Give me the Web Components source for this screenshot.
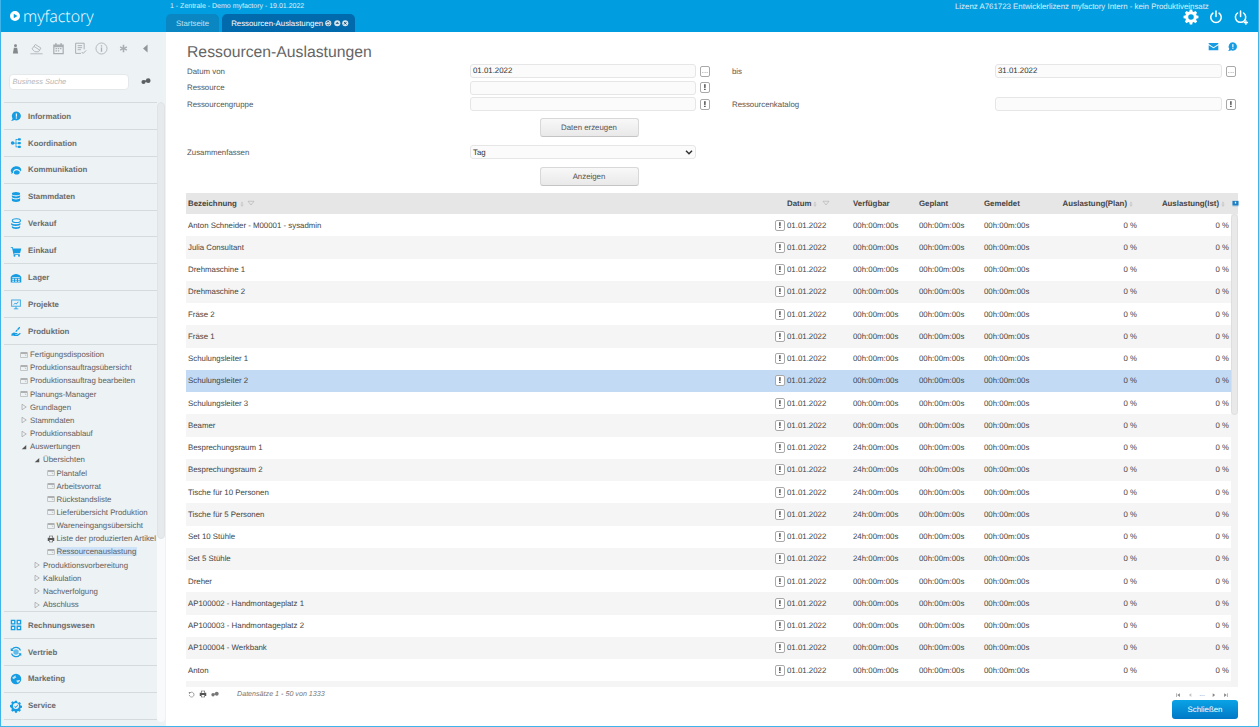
<!DOCTYPE html>
<html lang="de">
<head>
<meta charset="utf-8">
<title>myfactory</title>
<style>
  html, body { margin: 0; height: 100%; overflow: hidden; background: #fff; }
  body { font: 7.85px "Liberation Sans", Arial, sans-serif; color: #555; text-rendering: geometricPrecision; }
</style>
</head>
<body>
<mf-app></mf-app>
<script>
const ICONS = {
  info: '<path d="M8.500 2a6 6 0 1 1-2.600 11.400c-1.200.8-2.500 1.200-4.400 1.100 1.100-.9 1.700-2 1.800-3.300A6 6 0 0 1 8.500 2z"/><rect x="7.700" y="4.600" width="1.700" height="4.400" fill="#edf2f5"/><rect x="7.700" y="9.800" width="1.700" height="1.700" fill="#edf2f5"/>',
  nodes: '<circle cx="3.500" cy="8" r="2.400"/><rect x="10.500" y="1.500" width="4" height="3" rx="1"/><rect x="10.500" y="6.500" width="4" height="3" rx="1"/><rect x="10.500" y="11.500" width="4" height="3" rx="1"/><path d="M5 7.500h2.500V2.500h3v1H8.500v4h2v1h-2v4h2v1h-3V8.500H5z"/>',
  talk: '<path d="M1 9.500C1 6 4.500 3 8.500 3c3.600 0 6.500 2 6.500 5 0 .8-.2 1.400-.6 2-1-2.200-3.600-3.400-6-3.200C5.600 7 3.800 9 4 12l-2.600 1 .8-2.200A4 4 0 0 1 1 9.500z"/><path d="M5 11.500c0-2 1.800-3.200 3.800-3.200 2.500 0 4.200 1.300 4.200 3 0 1.600-1.700 2.700-4 2.700-2.400 0-4-1-4-2.500z"/>',
  db: '<ellipse cx="8" cy="3.500" rx="5.500" ry="2.300"/><path d="M2.500 5.300c1 1.400 2.900 1.900 5.500 1.900s4.500-.5 5.500-1.900v2.400c0 1.200-2.500 2.100-5.500 2.100s-5.500-.9-5.500-2.100z"/><path d="M2.500 9.300c1 1.400 2.900 1.900 5.500 1.900s4.500-.5 5.500-1.900v3c0 1.300-2.500 2.200-5.500 2.200s-5.500-.9-5.500-2.200z"/>',
  coins: '<ellipse cx="8.500" cy="3.500" rx="5.500" ry="2.600" fill="none" stroke="currentColor" stroke-width="1.400"/><path d="M1.500 6.500c1 1.200 3.500 1.700 6 1.700s5-.5 6.500-1.700v1.800c0 1.200-3 2.200-6.500 2.200s-6-1-6-2.200z"/><path d="M2.500 10.500c1 1.200 3 1.700 5.500 1.700s4.500-.5 5.500-1.700v1.800c0 1.200-2.500 2.200-5.500 2.200s-5.500-1-5.500-2.200z"/>',
  cart: '<path d="M1 2.500h2.600l.5 2H15l-1.500 6H5.600l.3 1.300H13v1.300H4.800L2.700 3.800H1z"/><circle cx="6" cy="14.200" r="1.300"/><circle cx="12" cy="14.200" r="1.300"/>',
  store: '<path d="M1 6.500C3 3.500 5.500 2.500 8 2.500s5 1 7 4V14H1z"/><g fill="#edf2f5"><rect x="3" y="7" width="10" height="1.100"/><rect x="3" y="9" width="2.400" height="1.500"/><rect x="6.800" y="9" width="2.400" height="1.500"/><rect x="10.600" y="9" width="2.400" height="1.500"/><rect x="3" y="11.500" width="2.400" height="1.500"/><rect x="6.800" y="11.500" width="2.400" height="1.500"/><rect x="10.600" y="11.500" width="2.400" height="1.500"/></g>',
  board: '<path fill-rule="evenodd" d="M1.500 2h13v9.500h-13zM2.800 3.300v6.900h10.400V3.300z" opacity=".8"/><path d="M4.500 8.500l2.300-2.300 1.500 1.200 2.600-2.700.6.600-3.100 3.300-1.600-1.200-1.700 1.700zM7.400 11.500h1.200V14H11v1H5v-1h2.400z"/>',
  plant: '<path d="M2 11.500l2.500-1.300c1.300-.5 2.300 0 3 .4h1.800c1 0 1 1.400 0 1.400H7v.5h3l3-1.800c1-.4 1.500.7.800 1.300L10.500 14.800H5.500l-1.300-.7L2 14.800z"/><path d="M7.500 9.300c-.2-2 .8-3.200 2.700-3.200-.1 1.800-1.100 3-2.700 3.200zM9.800 6.500c0-2.200 1.200-3.700 3.700-4.300-.1 2.600-1.400 4-3.700 4.300z"/>',
  tiles: '<path fill-rule="evenodd" d="M1 1h6.300v6.300H1zm1.800 1.800v2.700h2.700V2.800zM8.700 1H15v6.300H8.700zm1.800 1.800v2.700h2.700V2.800zM1 8.700h6.300V15H1zm1.800 1.800v2.700h2.700v-2.700zM8.700 8.700H15V15H8.700zm1.800 1.800v2.700h2.700v-2.700z"/>',
  sync: '<path fill-rule="evenodd" d="M8 1a7 7 0 0 1 6.700 5h-1.600A5.500 5.500 0 0 0 3.400 5L5 6.500H1V2.500l1.300 1.300A7 7 0 0 1 8 1zM1.300 10h1.600a5.500 5.500 0 0 0 9.700 1L11 9.500h4v4l-1.300-1.300A7 7 0 0 1 1.300 10z"/><circle cx="8" cy="8" r="3.600" opacity=".65"/>',
  globe: '<circle cx="8" cy="8" r="7"/><path fill="#edf2f5" d="M3 6c1.500-.5 3-2 4.500-3-.5 1.500 0 2 1 2.500-1 1-2.500 1-3 2.500C4.500 8 3.500 7.500 3 6zm5.500 4c1.500-.5 3.500-1 5-.5-.5 1.500-2 3-3.500 3.500-.5-1-1.500-2-1.500-3z" opacity=".8"/>',
  service: '<path fill-rule="evenodd" d="M6.700 1h2.600l.4 1.900 1.300.6 1.700-1 1.800 1.800-1 1.700.6 1.300 1.900.4v2.600l-1.900.4-.6 1.300 1 1.700-1.800 1.800-1.700-1-1.300.6-.4 1.900H6.700l-.4-1.900-1.300-.6-1.700 1-1.800-1.800 1-1.700-.6-1.300L0 9.300V6.700l1.900-.4.600-1.300-1-1.700 1.800-1.800 1.700 1 1.300-.6zM8 4a4 4 0 1 0 0 8 4 4 0 0 0 0-8z"/><path d="M6 7.500l1.500 1.500L10.500 6v1.800L7.500 10.800 6 9.300z"/>',
  person: '<g fill="#84898c"><circle cx="8" cy="4.500" r="1.800"/><path d="M6 7h4l1.200 7H4.800z"/></g>',
  eraser: '<path fill="none" stroke="currentColor" stroke-width="1" d="M2.500 8.500L6.500 3l7 4.500-3 4.500H6zM.5 14.500h15M5 5.500l7 4.500"/>',
  calendar: '<path fill-rule="evenodd" d="M1.500 3h2.300V1.500h2V3h4.400V1.500h2V3h2.300v12h-13zM3 6.500V13.500h10V6.500z"/><path d="M4.300 7.500h1.800v1.500H4.300zm2.800 0h1.800v1.500H7.100zm2.800 0h1.800v1.500H9.900zM4.300 10.300h1.800v1.500H4.300zm2.800 0h1.800v1.500H7.100z"/>',
  note: '<path fill="none" stroke="currentColor" stroke-width="1.200" d="M12.500 9V1.500H2v12.500h6.500M4.500 4.500h5.500M4.500 7h5.500M4.500 9.500h4M9.500 12.300l1.700 1.800L15 10.300"/>',
  circleinfo: '<circle cx="8" cy="8" r="6.800" fill="none" stroke="currentColor" stroke-width="1"/><rect x="7.200" y="4" width="1.600" height="1.600"/><rect x="7.200" y="6.700" width="1.600" height="5.300"/>',
  pin: '<path d="M7 3.500h2v3.200l2.700-1.500.9 1.600L10 8l2.600 1.200-.9 1.600L9 9.300v3.200H7V9.300l-2.700 1.500-.9-1.600L6 8 3.400 6.800l.9-1.600L7 6.700z"/>',
  collapse: '<path fill="#8f9599" d="M10.500 3v10L5 8z"/>',
  binoculars: '<circle cx="4" cy="9.500" r="3.300"/><circle cx="11.500" cy="7.500" r="3.800"/><rect x="5" y="7" width="4" height="2.500"/>',
  gear: '<path fill-rule="evenodd" d="M6.600 0h2.800l.4 2.100 1.400.6 1.800-1.200 2 2-1.200 1.800.6 1.400 2.100.4v2.800l-2.100.4-.6 1.400 1.200 1.800-2 2-1.800-1.200-1.400.6-.4 2.100H6.600l-.4-2.100-1.400-.6L3 15.500l-2-2 1.200-1.800-.6-1.400L-.5 9.900V7.100l2.100-.4.600-1.400L1 3.500l2-2 1.800 1.200 1.400-.6zM8 5.300a3.200 3.200 0 1 0 0 6.400 3.200 3.200 0 0 0 0-6.400z" transform="translate(0 -.5)"/>',
  power: '<path fill="none" stroke="currentColor" stroke-width="1.700" stroke-linecap="round" d="M8 1.200v6.300M4.500 3.500a6 6 0 1 0 7 0"/>',
  powerplus: '<path fill="none" stroke="currentColor" stroke-width="1.600" stroke-linecap="round" d="M7 1v5.800M3.800 3.200a5.500 5.500 0 1 0 6.400 0"/><path d="M12 11h1.400v1.600H15V14h-1.600v1.600H12V14h-1.600v-1.400H12z"/>',
  mail: '<path d="M1 3h14v1.400L8 9 1 4.400zM1 6l7 4.600L15 6v7.500H1z"/>',
  chat: '<path d="M8.500 2a6 6 0 1 1-2.600 11.400c-1.200.8-2.500 1.200-4.400 1.100 1.100-.9 1.700-2 1.800-3.300A6 6 0 0 1 8.500 2z"/><rect x="7.700" y="4.500" width="1.700" height="4.300" fill="#fff"/><rect x="7.700" y="9.700" width="1.700" height="1.700" fill="#fff"/>',
  window: '<path fill-rule="evenodd" d="M1 2.500h14v11H1zM2 5.500v7h12v-7z"/><path d="M9 7.500h3.500V11z" opacity=".6"/>',
  printer: '<path fill="#555" fill-rule="evenodd" d="M4 1.500h8v4h2.500v6.500H12v2.500H4V12H1.500V5.500H4zm1.200 1.200V6h5.600V2.700zm0 7.300v3.300h5.600V10z"/>',
  closed: '<path fill="none" stroke="currentColor" stroke-width="1.300" d="M4 2.500v11L12.500 8z"/>',
  open: '<path fill="#555" d="M12.500 4v8.500H3.500z"/>',
  reload: '<path fill="none" stroke="currentColor" stroke-width="1.500" d="M3.500 5.500A5.500 5.500 0 1 1 2.800 9"/><path d="M1.500 2.500l5 .8-3.500 3.700z"/>',
  filter: '<path fill="none" stroke="currentColor" stroke-width="1" d="M2 2.500h12L8 10z"/>',
  sort: '<path d="M8 1l3.500 5.500h-7z" opacity=".55"/><path fill="none" stroke="currentColor" d="M5 10h6L8 14.500z"/>',
  pagefirst: '<path d="M3 3h1.600v10H3zM13 3v10L6 8z"/>',
  pageprev: '<path d="M11.500 3v10L5 8z"/>',
  pagenext: '<path d="M4.500 3v10L11 8z"/>',
  pagelast: '<path d="M11.400 3H13v10h-1.600zM3 3v10l7-5z"/>',
  columns: '<rect x="1" y="2" width="14" height="9.500"/><rect x="6.500" y="4" width="3" height="4" fill="#fff"/><rect x="1" y="12.500" width="14" height="1.500"/>',
  tabsync: '<circle cx="8" cy="8" r="7.500" fill="#d5e3ec"/><path fill="none" stroke="#12456b" stroke-width="2" d="M4 7a4 4 0 0 1 7.500-1M12 9a4 4 0 0 1-7.500 1"/>',
  tabup: '<circle cx="8" cy="8" r="7.500" fill="#d5e3ec"/><path fill="#12456b" d="M3.500 9.500L8 5l4.500 4.500z"/>',
  tabclose: '<circle cx="8" cy="8" r="7.500" fill="#d5e3ec"/><path fill="none" stroke="#12456b" stroke-width="2.200" d="M5 5l6 6M11 5l-6 6"/>'
};

class MfIcon extends HTMLElement {
  connectedCallback() {
    const size = this.getAttribute('size') || 12;
    this.attachShadow({ mode: 'open' }).innerHTML = `
      <style>
        :host { display: inline-flex; flex: none; width: ${size}px; height: ${size}px; color: inherit; }
        svg { width: 100%; height: 100%; fill: currentColor; display: block; overflow: visible; }
      </style>
      <svg viewBox="0 0 16 16">${ICONS[this.getAttribute('name')] || ''}</svg>`;
  }
}
customElements.define('mf-icon', MfIcon);

const topbarTemplate = document.createElement('template');
topbarTemplate.innerHTML = `
<style>
  :host { display: flex; height: 32px; background: #009ee0; color: #fff; }
  .logo { width: 165px; flex: none; display: flex; align-items: center; gap: 3px; padding: 0 0 0 10px; box-sizing: border-box; }
  .logo svg { width: 10px; height: 10px; fill: #fff; }
  .logo span { font: 300 16px "Open Sans", sans-serif; line-height: 30px; }
  .mid { flex: 1; display: flex; flex-direction: column; justify-content: space-between; }
  .ctx { font-size: 7px; padding: 2px 0 0 5px; opacity: .85; line-height: 10px; }
  .tabs { display: flex; gap: 3px; height: 18px; margin-left: 1px; }
  .tab { height: 18px; border-radius: 5px 5px 0 0; background: #0a86c2; padding: 0 10px; display: flex; align-items: center; color: #bfe3f5; }
  .tab.on { background: #006aad; color: #fff; gap: 2px; padding: 0 6.500px 0 9px; }
  .right { width: 304px; flex: none; position: relative; }
  .lic { font-size: 7.870px; line-height: 10px; padding: 2px 0 0 0; opacity: .85; white-space: nowrap; }
  .acts { position: absolute; left: 229px; top: 10px; display: flex; gap: 11px; }
</style>
<div class="logo">
  <svg viewBox="0 0 16 16"><path fill-rule="evenodd" d="M8 0a8 8 0 1 1 0 16A8 8 0 0 1 8 0zM6 4.500v7L12 8z"/></svg>
  <span>myfactory</span>
</div>
<div class="mid">
  <div class="ctx">1 - Zentrale - Demo myfactory - 19.01.2022</div>
  <div class="tabs">
    <div class="tab">Startseite</div>
    <div class="tab on">Ressourcen-Auslastungen<mf-icon name="tabsync" size="6.500"></mf-icon><mf-icon name="tabup" size="6.500"></mf-icon><mf-icon name="tabclose" size="6.500"></mf-icon></div>
  </div>
</div>
<div class="right">
  <div class="lic">Lizenz A761723 Entwicklerlizenz myfactory Intern - kein Produktiveinsatz</div>
  <div class="acts">
    <mf-icon name="gear" size="14"></mf-icon>
    <mf-icon name="power" size="14"></mf-icon>
    <mf-icon name="powerplus" size="15"></mf-icon>
  </div>
</div>`;
class MfTopbar extends HTMLElement {
  constructor() {
    super();
    this.attachShadow({ mode: 'open' }).appendChild(topbarTemplate.content.cloneNode(true));
  }
}
customElements.define('mf-topbar', MfTopbar);

class MfNavItem extends HTMLElement {
  connectedCallback() {
    this.attachShadow({ mode: 'open' }).innerHTML = `
      <style>
        :host { display: flex; align-items: center; height: 26.900px; box-sizing: border-box; border-bottom: 1px solid #d5dadd; padding: .5px 0 0 6px; gap: 6px; font-weight: bold; color: #6b6b6b; }
        mf-icon { color: #159ce2; }
      </style>
      <mf-icon name="${this.getAttribute('icon')}" size="12"></mf-icon><slot></slot>`;
  }
}
customElements.define('mf-nav-item', MfNavItem);

class MfTreeItem extends HTMLElement {
  connectedCallback() {
    const level = +this.getAttribute('level');
    const icon = this.getAttribute('icon');
    const on = this.hasAttribute('selected');
    const left = [16, 16, 29, 42.500][level];
    this.attachShadow({ mode: 'open' }).innerHTML = `
      <style>
        :host { display: flex; align-items: center; height: 13.160px; padding-left: ${left}px; gap: 2px; color: #5e5e5e; white-space: nowrap; }
        mf-icon { color: #9a9a9a; }
        span { ${on ? 'background: #cfe3f8; padding: 0 1px 0 0;' : ''} }
      </style>
      <mf-icon name="${icon}" size="8"></mf-icon><span><slot></slot></span>`;
  }
}
customElements.define('mf-tree-item', MfTreeItem);

const sideTemplate = document.createElement('template');
sideTemplate.innerHTML = `
<style>
  :host { display: flex; flex-direction: column; background: #edf2f5; height: 100%; min-height: 0; overflow: hidden; }
  .tools { display: flex; height: 30px; align-items: center; gap: 8.700px; padding: 2px 0 0 7.500px; color: #a8aeb2; box-sizing: border-box; }
  .search { display: flex; align-items: center; height: 40px; padding: 0 0 0 7.500px; gap: 12.500px; box-sizing: border-box; }
  .search div { width: 120px; height: 16px; box-sizing: border-box; background: #fff; border: 1px solid #e4e8ea; border-radius: 4px; padding-left: 3px; line-height: 14px; font-style: italic; color: #b5b5b5; font-size: 7.500px; }
  .search mf-icon { color: #5c6063; margin-top: -3px; }
  .body { flex: 1; display: flex; min-height: 0; padding-left: 3px; }
  .list { width: 153px; flex: none; border-top: 1px solid #d5dadd; height: 100%; }
  .tree { padding: 3px 0 0 0; height: 267px; box-sizing: border-box; border-bottom: 1px solid #d5dadd; }
  .rail { flex: 1; background: #f8fafb; border-radius: 4px; margin-bottom: 4px; margin-right: 1px; }
  .thumb { height: 437px; background: #e7eaec; border: 1px solid #dfe3e5; border-radius: 4px; box-sizing: border-box; }
</style>
<div class="tools">
  <mf-icon name="person" size="13"></mf-icon>
  <mf-icon name="eraser" size="13"></mf-icon>
  <mf-icon name="calendar" size="13"></mf-icon>
  <mf-icon name="note" size="13"></mf-icon>
  <mf-icon name="circleinfo" size="13"></mf-icon>
  <mf-icon name="pin" size="13"></mf-icon>
  <mf-icon name="collapse" size="13"></mf-icon>
</div>
<div class="search"><div>Business Suche</div><mf-icon name="binoculars" size="10"></mf-icon></div>
<div class="body">
  <div class="list">
    <slot name="top"></slot>
    <div class="tree"><slot name="tree"></slot></div>
    <slot name="bottom"></slot>
  </div>
  <div class="rail"><div class="thumb"></div></div>
</div>`;
class MfSidebar extends HTMLElement {
  constructor() {
    super();
    this.attachShadow({ mode: 'open' }).appendChild(sideTemplate.content.cloneNode(true));
  }
}
customElements.define('mf-sidebar', MfSidebar);

const fieldTemplate = document.createElement('template');
fieldTemplate.innerHTML = `
<style>
  :host { display: flex; align-items: center; gap: 4px; }
  .box { height: 14px; box-sizing: border-box; background: #fbfbfb; border: 1px solid #e6e6e6; border-radius: 3px; padding: 0 2px; line-height: 12px; flex: 1; color: #333; }
  .btn { width: 10px; height: 11px; box-sizing: border-box; border: 1px solid #a9a9a9; border-radius: 2px; background: #fff; text-align: center; line-height: 8px; color: #777; flex: none; will-change: transform; }
  .btn.b { font-weight: bold; color: #111; line-height: 9px; font-size: 8.500px; }
</style>
<div class="box"><slot></slot></div><div class="btn"></div>`;
class MfField extends HTMLElement {
  constructor() {
    super();
    this.attachShadow({ mode: 'open' }).appendChild(fieldTemplate.content.cloneNode(true));
  }
  connectedCallback() {
    const btn = this.shadowRoot.querySelector('.btn');
    const kind = this.getAttribute('btn');
    btn.textContent = kind;
    if (kind === '!') btn.classList.add('b');
  }
}
customElements.define('mf-field', MfField);

const buttonTemplate = document.createElement('template');
buttonTemplate.innerHTML = `
<style>
  :host { display: block; width: 99px; height: 19px; box-sizing: border-box; border: 1px solid #d8d8d8; border-bottom-color: #c4c4c4; border-radius: 3px; background: linear-gradient(#f8f8f8, #e9e9e9); text-align: center; line-height: 17px; color: #555; }
</style>
<slot></slot>`;
class MfButton extends HTMLElement {
  constructor() {
    super();
    this.attachShadow({ mode: 'open' }).appendChild(buttonTemplate.content.cloneNode(true));
  }
}
customElements.define('mf-button', MfButton);

const COLS = '589px 12px 66px 66px 65px 80px 73px 94px';

const rowTemplate = document.createElement('template');
rowTemplate.innerHTML = `
<style>
  :host { display: grid; grid-template-columns: ${COLS}; align-items: center; height: 22.250px; color: #444; background: #fff; white-space: nowrap; }
  :host(:nth-child(even)) { background: #f5f5f5; }
  :host([selected]) { background: #c3daf5; }
  .name { padding-left: 2px; }
  .btn { width: 10px; height: 11px; box-sizing: border-box; border: 1px solid #a9a9a9; border-radius: 2px; background: #fff; text-align: center; font-weight: bold; line-height: 9px; color: #111; font-size: 8.500px; will-change: transform; }
  .num { text-align: right; }
  .num.last { padding-right: 2px; }
</style>
<div class="name"></div><div class="btn">!</div><div>01.01.2022</div><div class="av"></div><div>00h:00m:00s</div><div>00h:00m:00s</div><div class="num">0 %</div><div class="num last">0 %</div>`;
class MfRow extends HTMLElement {
  constructor() {
    super();
    this.attachShadow({ mode: 'open' }).appendChild(rowTemplate.content.cloneNode(true));
  }
  connectedCallback() {
    this.shadowRoot.querySelector('.name').textContent = this.getAttribute('label');
    this.shadowRoot.querySelector('.av').textContent = this.getAttribute('avail') || '00h:00m:00s';
  }
}
customElements.define('mf-row', MfRow);

const ROWS = [
  ['Anton Schneider - M00001 - sysadmin'], ['Julia Consultant'], ['Drehmaschine 1'], ['Drehmaschine 2'],
  ['Fräse 2'], ['Fräse 1'], ['Schulungsleiter 1'], ['Schulungsleiter 2'], ['Schulungsleiter 3'], ['Beamer'],
  ['Besprechungsraum 1', 1], ['Besprechungsraum 2', 1], ['Tische für 10 Personen', 1], ['Tische für 5 Personen', 1],
  ['Set 10 Stühle', 1], ['Set 5 Stühle', 1], ['Dreher'], ['AP100002 - Handmontageplatz 1'],
  ['AP100003 - Handmontageplatz 2'], ['AP100004 - Werkbank'], ['Anton']
];

const gridTemplate = document.createElement('template');
gridTemplate.innerHTML = `
<style>
  :host { display: block; }
  .head { display: grid; grid-template-columns: ${COLS} 7px; height: 21px; align-items: center; background: #e6e6e6; font-weight: bold; color: #444; white-space: nowrap; }
  .head > div { display: flex; align-items: center; }
  .head .r { justify-content: flex-end; }
  .head mf-icon { color: #a5a5a5; }
  .name { padding-left: 2px; gap: 2px; }
  .date { grid-column: 2 / 4; padding-left: 12px; gap: 1px; }
  .plan { padding-right: 3px; gap: 1px; }
  .ist { padding-right: 5px; gap: 1px; }
  .head .cols { color: #1c7fc4; margin-left: 1px; }
  .body { display: flex; height: 473px; overflow: hidden; }
  .rows { width: 1045px; flex: none; background: linear-gradient(#fff, #fff) top / 100% 467px no-repeat, #f5f5f5; }
  .bar { flex: 1; background: #f4f4f4; }
  .thumb { height: 201px; background: #e9e9e9; border: 1px solid #dedede; border-radius: 4px; box-sizing: border-box; }
</style>
<div class="head">
  <div class="name">Bezeichnung<mf-icon name="sort" size="6"></mf-icon><mf-icon name="filter" size="8"></mf-icon></div>
  <div class="date">Datum<mf-icon name="sort" size="6"></mf-icon><mf-icon name="filter" size="8" style="margin-left:3px"></mf-icon></div>
  <div>Verfügbar</div>
  <div>Geplant</div>
  <div>Gemeldet</div>
  <div class="r plan">Auslastung(Plan)<mf-icon name="sort" size="6"></mf-icon></div>
  <div class="r ist">Auslastung(Ist)<mf-icon name="sort" size="6"></mf-icon></div>
  <div><mf-icon class="cols" name="columns" size="7"></mf-icon></div>
</div>
<div class="body">
  <div class="rows"></div>
  <div class="bar"><div class="thumb"></div></div>
</div>`;
class MfGrid extends HTMLElement {
  constructor() {
    super();
    this.attachShadow({ mode: 'open' }).appendChild(gridTemplate.content.cloneNode(true));
    const rows = this.shadowRoot.querySelector('.rows');
    ROWS.forEach(([label, full]) => {
      const r = document.createElement('mf-row');
      r.setAttribute('label', label);
      if (full) r.setAttribute('avail', '24h:00m:00s');
      if (label === 'Schulungsleiter 2') r.setAttribute('selected', '');
      rows.appendChild(r);
    });
  }
}
customElements.define('mf-grid', MfGrid);

const mainTemplate = document.createElement('template');
mainTemplate.innerHTML = `
<style>
  :host { display: flex; flex-direction: column; padding: 0 20px 0 20px; min-width: 0; height: 100%; box-sizing: border-box; position: relative; }
  h1 { font: normal 15.750px/20px "Liberation Sans", sans-serif; color: #666; margin: 0; padding: 11px 0 0 1px; height: 20px; }
  .corner { position: absolute; right: 20px; top: 9px; display: flex; gap: 8px; color: #159ce2; }
  .form { display: grid; grid-template-columns: 283px 240px 22px 263px 241px; padding-left: 1px; grid-auto-rows: 16.500px; align-items: center; }
  .rowbtn { display: grid; grid-template-columns: 283px 240px; padding-left: 1px; }
  .rowbtn mf-button { grid-column: 2; justify-self: center; }
  .c1 { padding: 5.500px 0 8px; }
  .c2 { padding: 8px 0 7px; }
  .sel { display: grid; grid-template-columns: 283px 226px; padding-left: 1px; align-items: center; height: 14px; }
  .sel div { height: 14px; box-sizing: border-box; background: #fbfbfb; border: 1px solid #e6e6e6; border-radius: 3px; display: flex; justify-content: space-between; align-items: center; padding: 0 2px; color: #333; }
  .foot { display: flex; align-items: flex-start; justify-content: space-between; width: 1052px; padding-top: 1px; height: 38px; box-sizing: border-box; position: relative; color: #777; }
  .tools { display: flex; align-items: center; gap: 4px; padding: 2px 0 0 2px; }
  .tools em { margin-left: 14px; font-size: 7.150px; color: #777; }
  .pager { display: flex; gap: 6px; padding: 4px 9px 0 0; color: #888; align-items: center; }
  .pager span { font-size: 7px; line-height: 6px; }
  .close { position: absolute; right: 0; top: 13px; width: 66px; height: 19px; border-radius: 3px; background: linear-gradient(#0aa3e6, #0078c6); color: #fff; text-align: center; line-height: 19px; }
</style>
<h1>Ressourcen-Auslastungen</h1>
<div class="corner"><mf-icon name="mail" size="11"></mf-icon><mf-icon name="chat" size="11"></mf-icon></div>
<div class="form">
  <div>Datum von</div>
  <mf-field btn="...">01.01.2022</mf-field>
  <div style="grid-column:4">bis</div>
  <mf-field btn="...">31.01.2022</mf-field>
  <div style="grid-column:1">Ressource</div>
  <mf-field btn="!"></mf-field>
  <div style="grid-column:1">Ressourcengruppe</div>
  <mf-field btn="!"></mf-field>
  <div style="grid-column:4">Ressourcenkatalog</div>
  <mf-field btn="!"></mf-field>
</div>
<div class="rowbtn c1"><mf-button>Daten erzeugen</mf-button></div>
<div class="sel"><span>Zusammenfassen</span><div>Tag<svg width="8" height="5" viewBox="0 0 8 5"><path d="M1 .8l3 3 3-3" fill="none" stroke="#333" stroke-width="1.500"/></svg></div></div>
<div class="rowbtn c2"><mf-button>Anzeigen</mf-button></div>
<mf-grid></mf-grid>
<div class="foot">
  <div class="tools">
    <mf-icon name="reload" size="7"></mf-icon><mf-icon name="printer" size="8"></mf-icon><mf-icon name="binoculars" size="8"></mf-icon>
    <em>Datensätze 1 - 50 von 1333</em>
  </div>
  <div class="pager">
    <mf-icon name="pagefirst" size="6"></mf-icon><mf-icon name="pageprev" size="6" style="opacity:.5"></mf-icon><span>...</span><mf-icon name="pagenext" size="6"></mf-icon><mf-icon name="pagelast" size="6"></mf-icon>
  </div>
  <div class="close">Schließen</div>
</div>`;
class MfMain extends HTMLElement {
  constructor() {
    super();
    this.attachShadow({ mode: 'open' }).appendChild(mainTemplate.content.cloneNode(true));
  }
}
customElements.define('mf-main', MfMain);

const tree = [
  [1, 'window', 'Fertigungsdisposition'], [1, 'window', 'Produktionsauftragsübersicht'], [1, 'window', 'Produktionsauftrag bearbeiten'],
  [1, 'window', 'Planungs-Manager'], [1, 'closed', 'Grundlagen'], [1, 'closed', 'Stammdaten'], [1, 'closed', 'Produktionsablauf'],
  [1, 'open', 'Auswertungen'], [2, 'open', 'Übersichten'], [3, 'window', 'Plantafel'], [3, 'window', 'Arbeitsvorrat'],
  [3, 'window', 'Rückstandsliste'], [3, 'window', 'Lieferübersicht Produktion'], [3, 'window', 'Wareneingangsübersicht'],
  [3, 'printer', 'Liste der produzierten Artikel'], [3, 'window', 'Ressourcenauslastung', 1],
  [2, 'closed', 'Produktionsvorbereitung'], [2, 'closed', 'Kalkulation'], [2, 'closed', 'Nachverfolgung'], [2, 'closed', 'Abschluss']
];
const navTop = [['info', 'Information'], ['nodes', 'Koordination'], ['talk', 'Kommunikation'], ['db', 'Stammdaten'], ['coins', 'Verkauf'], ['cart', 'Einkauf'], ['store', 'Lager'], ['board', 'Projekte'], ['plant', 'Produktion']];
const navBottom = [['tiles', 'Rechnungswesen'], ['sync', 'Vertrieb'], ['globe', 'Marketing'], ['service', 'Service']];

const appTemplate = document.createElement('template');
appTemplate.innerHTML = `
<style>
  :host { display: grid; grid-template-columns: 165px 1fr; grid-template-rows: 32px 1fr; width: 1259px; height: 727px; box-sizing: border-box; border: solid #3fb4ea; border-width: 0 1px 1px 1px; overflow: hidden; }
  mf-topbar { grid-column: 1 / 3; margin: 0 -1px; }
</style>
<mf-topbar></mf-topbar>
<mf-sidebar>
${navTop.map(n => `<mf-nav-item slot="top" icon="${n[0]}">${n[1]}</mf-nav-item>`).join('')}
${tree.map(t => `<mf-tree-item slot="tree" level="${t[0]}" icon="${t[1]}"${t[3] ? ' selected' : ''}>${t[2]}</mf-tree-item>`).join('')}
${navBottom.map(n => `<mf-nav-item slot="bottom" icon="${n[0]}">${n[1]}</mf-nav-item>`).join('')}
</mf-sidebar>
<mf-main></mf-main>`;
class MfApp extends HTMLElement {
  constructor() {
    super();
    this.attachShadow({ mode: 'open' }).appendChild(appTemplate.content.cloneNode(true));
  }
}
customElements.define('mf-app', MfApp);
</script>
</body>
</html>
